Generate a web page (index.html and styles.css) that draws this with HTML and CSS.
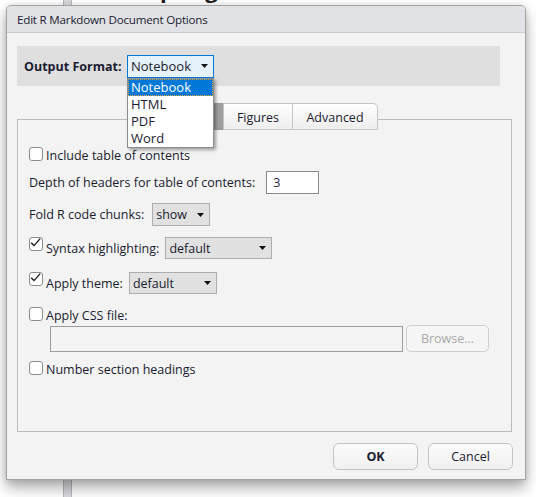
FILE: index.html
```html
<!DOCTYPE html>
<html>
<head>
<meta charset="utf-8">
<title>Edit R Markdown Document Options</title>
<link rel="stylesheet" href="styles.css">
</head>
<body>
<div class="desk">
  <div class="desk-head">Spring</div>
  <div class="desk-strip"></div>
</div>

<div class="dialog">
  <div class="titlebar">Edit R Markdown Document Options</div>
  <div class="dlg-body">
    <div class="fmt-bar">
      <span class="fmt-label">Output Format:</span>
      <div class="combo">
        <div class="select select-focus">
          <span>Notebook</span>
          <svg class="caret" width="7" height="4" viewBox="0 0 7 4"><path d="M0 0H7L3.5 4Z"/></svg>
        </div>
        <ul class="listbox">
          <li class="opt opt-sel">Notebook</li>
          <li class="opt">HTML</li>
          <li class="opt">PDF</li>
          <li class="opt">Word</li>
        </ul>
      </div>
    </div>

    <div class="tabs">
      <div class="tab tab-active">General</div>
      <div class="tab tab-mid">Figures</div>
      <div class="tab tab-last">Advanced</div>
    </div>

    <div class="panel">
      <div class="row row-1">
        <span class="cb"><svg width="14" height="14" viewBox="0 0 14 14"><rect x="0.5" y="0.5" width="13" height="13" rx="2.5"/></svg></span>
        <span class="lbl">Include table of contents</span>
      </div>
      <div class="row row-2">
        <span class="lbl">Depth of headers for table of contents:</span>
        <span class="textbox textbox-depth">3</span>
      </div>
      <div class="row row-3">
        <span class="lbl">Fold R code chunks:</span>
        <div class="select select-fold">
          <span>show</span>
          <svg class="caret" width="7" height="4" viewBox="0 0 7 4"><path d="M0 0H7L3.5 4Z"/></svg>
        </div>
      </div>
      <div class="row row-4">
        <span class="cb cb-top"><svg width="14" height="14" viewBox="0 0 14 14"><rect x="0.5" y="0.5" width="13" height="13" rx="2.5"/><path class="tick" d="M2.2 5.8L5 8.6L11.2 1.6"/></svg></span>
        <span class="lbl">Syntax highlighting:</span>
        <div class="select select-syntax">
          <span>default</span>
          <svg class="caret" width="7" height="4" viewBox="0 0 7 4"><path d="M0 0H7L3.5 4Z"/></svg>
        </div>
      </div>
      <div class="row row-5">
        <span class="cb cb-top"><svg width="14" height="14" viewBox="0 0 14 14"><rect x="0.5" y="0.5" width="13" height="13" rx="2.5"/><path class="tick" d="M2.2 5.8L5 8.6L11.2 1.6"/></svg></span>
        <span class="lbl">Apply theme:</span>
        <div class="select select-theme">
          <span>default</span>
          <svg class="caret" width="7" height="4" viewBox="0 0 7 4"><path d="M0 0H7L3.5 4Z"/></svg>
        </div>
      </div>
      <div class="row row-6">
        <span class="cb"><svg width="14" height="14" viewBox="0 0 14 14"><rect x="0.5" y="0.5" width="13" height="13" rx="2.5"/></svg></span>
        <span class="lbl">Apply CSS file:</span>
      </div>
      <div class="row row-7">
        <span class="textbox textbox-css"></span>
        <span class="browse">Browse...</span>
      </div>
      <div class="row row-8">
        <span class="cb"><svg width="14" height="14" viewBox="0 0 14 14"><rect x="0.5" y="0.5" width="13" height="13" rx="2.5"/></svg></span>
        <span class="lbl">Number section headings</span>
      </div>
    </div>

    <div class="buttons">
      <button class="btn btn-ok">OK</button>
      <button class="btn">Cancel</button>
    </div>
  </div>
</div>
</body>
</html>
```

FILE: styles.css
```css
html, body {
  margin: 0;
  padding: 0;
}

body {
  width: 536px;
  height: 497px;
  overflow: hidden;
  position: relative;
  background: #ffffff;
  font-family: "Open Sans", "Noto Sans", sans-serif;
}

/* background window behind the dialog */
.desk {
  height: 497px;
}

.desk-head {
  position: absolute;
  left: 148px;
  top: -26px;
  font-size: 22px;
  line-height: 30px;
  font-weight: 700;
  color: #222;
}

.desk-strip {
  margin-left: 63px;
  width: 7px;
  height: 497px;
  background: #d8d8dd;
  border-left: 1px solid #b7b7be;
  border-right: 1px solid #b7b7be;
}

/* dialog */
.dialog {
  position: absolute;
  left: 6px;
  top: 5px;
  width: 520px;
  height: 475px;
  box-sizing: border-box;
  border: 1px solid #a3a3a3;
  border-radius: 5px 5px 0 0;
  background: #f2f3f2;
  box-shadow: 0 8px 14px rgba(0, 0, 0, 0.32), 0 0 6px rgba(0, 0, 0, 0.12);
  display: flex;
  flex-direction: column;
  color: #1b1b30;
  font-size: 12.5px;
}

.titlebar {
  flex: none;
  height: 26px;
  background: #e1e2e6;
  border-bottom: 1px solid #cbccd0;
  border-radius: 4px 4px 0 0;
  padding-left: 10px;
  display: flex;
  align-items: center;
  font-size: 11.6px;
  letter-spacing: -0.2px;
}

.dlg-body {
  flex: 1;
  display: flex;
  flex-direction: column;
  padding: 13px 13px 0 10px;
}

/* output format bar */
.fmt-bar {
  flex: none;
  width: 483px;
  height: 40px;
  box-sizing: border-box;
  background: #dfdfdf;
  padding-left: 7px;
  display: flex;
  align-items: center;
  position: relative;
  z-index: 3;
}

.fmt-label {
  width: 103px;
  font-weight: 700;
  white-space: nowrap;
}

.combo {
  position: relative;
}

.select {
  box-sizing: border-box;
  height: 23px;
  border: 1px solid #adadad;
  background: #e1e1e1;
  display: flex;
  align-items: center;
  justify-content: space-between;
  padding: 0 5px 0 3px;
}

.caret {
  fill: #111;
  flex: none;
}

.select-focus {
  width: 87px;
  height: 23px;
  border-color: #0078d7;
  background: #e5f1fb;
  font-size: 13px;
}

.listbox {
  position: absolute;
  left: 0;
  top: 23px;
  width: 87px;
  box-sizing: border-box;
  margin: 0;
  padding: 0;
  list-style: none;
  background: #ffffff;
  border: 1px solid #8d8d8d;
  box-shadow: 2px 2px 3px rgba(0, 0, 0, 0.35);
  font-size: 13px;
}

.opt {
  height: 17px;
  line-height: 17px;
  padding-left: 3px;
  box-sizing: border-box;
}

.opt-sel {
  background: #0078d7;
  color: #ffffff;
  outline: 1px dotted #e8a33a;
  outline-offset: -1px;
}

/* tabs */
.tabs {
  flex: none;
  width: 495px;
  height: 27px;
  margin-top: 17px;
  margin-bottom: -11px;
  display: flex;
  justify-content: center;
  position: relative;
  z-index: 1;
}

.tab {
  box-sizing: border-box;
  height: 27px;
  border: 1px solid #c6c6c6;
  background: linear-gradient(#ffffff, #eeeeee);
  display: flex;
  align-items: center;
  justify-content: center;
  padding-top: 1px;
}

.tab-active {
  width: 73px;
  background: #9d9d9d;
  border-color: #9a9a9a;
  border-radius: 5px 0 0 0;
}

.tab-mid {
  width: 70px;
  margin-left: -1px;
}

.tab-last {
  width: 86px;
  margin-left: -1px;
  border-radius: 0 5px 0 0;
}

/* content panel */
.panel {
  flex: none;
  width: 495px;
  height: 313px;
  box-sizing: border-box;
  border: 1px solid #bcbcbc;
  padding: 27px 0 0 11px;
  display: flex;
  flex-direction: column;
}

.row {
  display: flex;
  align-items: center;
}

.row-1 { height: 14px; }
.row-2 { margin-top: 10px; }
.row-3 { margin-top: 9px; }
.row-4 { margin-top: 11px; }
.row-5 { margin-top: 13px; }
.row-6 { margin-top: 13px; height: 14px; }
.row-7 { margin-top: 4px; padding-left: 21px; align-items: flex-start; }
.row-8 { margin-top: 9px; height: 14px; }

.cb {
  flex: none;
  width: 14px;
  height: 14px;
  margin-right: 3px;
  display: block;
}

.cb svg {
  display: block;
}

.cb rect {
  fill: #ffffff;
  stroke: #8c8c8c;
  stroke-width: 1;
}

.cb .tick {
  fill: none;
  stroke: #1a1a1a;
  stroke-width: 1.4;
}

.cb-top {
  align-self: flex-start;
}

.lbl {
  white-space: nowrap;
}

.row-1 .lbl, .row-6 .lbl, .row-8 .lbl {
  padding-top: 2px;
}

.textbox {
  box-sizing: border-box;
  border: 1px solid #8a8a8a;
  background: #ffffff;
  display: flex;
  align-items: center;
}

.textbox-depth {
  width: 53px;
  height: 23px;
  margin-left: 11px;
  padding-left: 6px;
}

.textbox-css {
  width: 353px;
  height: 26px;
  margin-top: 1px;
  background: #f2f3f2;
  border-color: #9c9c9c;
}

.browse {
  box-sizing: border-box;
  width: 83px;
  height: 27px;
  margin-left: 3px;
  border: 1px solid #cfcfcf;
  border-radius: 5px;
  background: #f4f5f4;
  color: #ababab;
  display: flex;
  align-items: center;
  justify-content: center;
}

.select-fold {
  width: 58px;
  margin-left: 8px;
}

.select-syntax {
  width: 107px;
  height: 22px;
  margin-left: 6px;
}

.select-theme {
  width: 88px;
  height: 22px;
  margin-left: 6px;
}

/* buttons */
.buttons {
  flex: none;
  display: flex;
  justify-content: flex-end;
  gap: 10px;
  margin-top: 11px;
  margin-right: -1px;
}

.btn {
  box-sizing: border-box;
  width: 85px;
  height: 27px;
  border: 1px solid #c4c4c4;
  border-radius: 6px;
  background: linear-gradient(#fbfbfb, #f0f0f0);
  font-family: "Open Sans", "Noto Sans", sans-serif;
  font-size: 12.5px;
  color: #1b1b30;
  padding: 0;
}

.btn-ok {
  font-weight: 700;
}
```
